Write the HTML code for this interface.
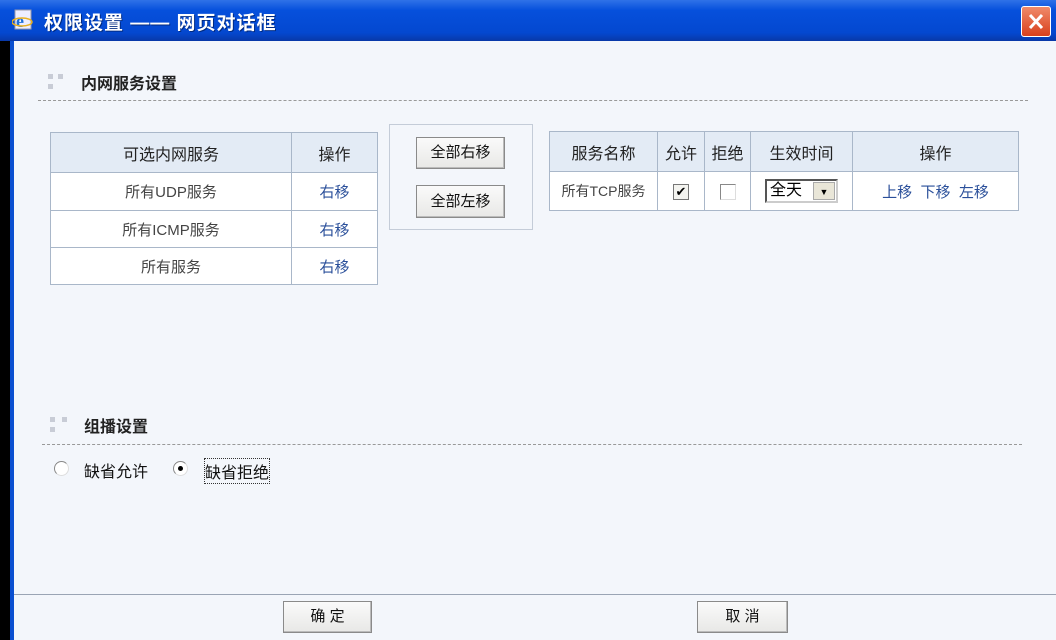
<!DOCTYPE html>
<html><head><meta charset="utf-8"><style>
*{margin:0;padding:0;box-sizing:border-box}
body{width:1056px;height:640px;overflow:hidden;background:#000;font-family:"Liberation Sans","Noto Sans CJK SC","WenQuanYi Zen Hei",sans-serif;font-size:15px;color:#333;position:relative}
.abs{position:absolute}
#title{left:0;top:0;width:1056px;height:41px;background:linear-gradient(#2f72e8,#0650dc 25%,#0448d0 80%,#0838a8);}
#title span{position:absolute;left:44px;top:8px;color:#fff;font-weight:bold;font-size:19px;letter-spacing:1px;text-shadow:1px 1px #002a80}
#frame{left:10px;top:41px;width:1046px;height:599px;background:#0a4fd0}
#content{left:14px;top:41px;width:1042px;height:599px;background:#f3f6fb}
.sec{font-weight:bold;font-size:16px;color:#222}
.dash{border-top:1px dashed #999;height:0}
table{border-collapse:collapse;position:absolute;background:#fff}
td{border:1px solid #a9b7c9;text-align:center;color:#444}
tr.h td{background:#e3ebf5;color:#222;font-size:16px}
a{color:#2a4f9a;text-decoration:none}
.btn{position:absolute;background:linear-gradient(#fafafa,#e8e8e6);border:1px solid #8a8a8a;box-shadow:inset -1px -1px #bbb;text-align:center;font-size:15px;color:#111}
.dots i{position:absolute;width:5px;height:5px;background:#c8ccd6}
</style></head><body>
<div id="title" class="abs">
<svg class="abs" style="left:12px;top:9px" width="22" height="22"><rect x="3" y="1" width="16" height="19" fill="#eef" stroke="#99a"/><text x="4" y="18" font-size="18" font-weight="bold" fill="#1d6fd8" font-family="Liberation Serif">e</text><ellipse cx="10" cy="13" rx="10" ry="4" fill="none" stroke="#e8b020" stroke-width="1.5"/></svg>
<span>权限设置 —— 网页对话框</span>
<div class="abs" style="left:1021px;top:6px;width:30px;height:31px;background:linear-gradient(#f08a6a,#d8401c);border:1px solid #fff;border-radius:3px"><svg width="28" height="29"><path d="M8 8L20 21M20 8L8 21" stroke="#fff" stroke-width="3"/></svg></div>
</div>
<div id="frame" class="abs"></div>
<div id="content" class="abs"></div>

<div class="dots"><i style="left:48px;top:74px"></i><i style="left:58px;top:74px"></i><i style="left:48px;top:84px"></i></div>
<div class="abs sec" style="left:81px;top:70px">内网服务设置</div>
<div class="abs dash" style="left:38px;top:100px;width:990px"></div>

<table style="left:50px;top:132px;width:328px">
<tr class="h" style="height:40px"><td style="width:241px">可选内网服务</td><td>操作</td></tr>
<tr style="height:38px"><td>所有UDP服务</td><td><a>右移</a></td></tr>
<tr style="height:37px"><td>所有ICMP服务</td><td><a>右移</a></td></tr>
<tr style="height:37px"><td>所有服务</td><td><a>右移</a></td></tr>
</table>

<div class="abs" style="left:389px;top:124px;width:144px;height:106px;border:1px solid #c4ccd8"></div>
<div class="btn" style="left:416px;top:137px;width:89px;height:32px;line-height:30px">全部右移</div>
<div class="btn" style="left:416px;top:185px;width:89px;height:33px;line-height:31px">全部左移</div>

<table style="left:549px;top:131px;width:470px">
<tr class="h" style="height:40px"><td style="width:108px">服务名称</td><td style="width:47px">允许</td><td style="width:46px">拒绝</td><td style="width:102px">生效时间</td><td>操作</td></tr>
<tr style="height:39px"><td style="font-size:14px">所有TCP服务</td>
<td><span style="display:inline-block;width:16px;height:16px;border:1px solid #777;background:#f4f4f0;vertical-align:middle;line-height:14px;font-size:13px;color:#000">✔</span></td>
<td><span style="display:inline-block;width:16px;height:16px;border:1px solid #888;border-right-color:#ddd;border-bottom-color:#ddd;background:#fff;vertical-align:middle"></span></td>
<td><span style="display:inline-block;width:73px;height:24px;border:2px solid #555;border-right-color:#ccc;border-bottom-color:#ccc;background:#fff;vertical-align:middle;position:relative;text-align:left;padding-left:3px;line-height:20px;color:#000;font-size:16px">全天<span style="position:absolute;right:1px;top:1px;width:22px;height:18px;background:#e9e6d8;border:1px solid #aaa;font-size:9px;text-align:center;line-height:18px">▼</span></span></td>
<td><a>上移</a>&nbsp; <a>下移</a>&nbsp; <a>左移</a></td></tr>
</table>

<div class="dots"><i style="left:50px;top:417px"></i><i style="left:62px;top:417px"></i><i style="left:50px;top:427px"></i></div>
<div class="abs sec" style="left:84px;top:413px">组播设置</div>
<div class="abs dash" style="left:42px;top:444px;width:980px"></div>

<div class="abs" style="left:54px;top:461px;width:15px;height:15px;border-radius:50%;background:#fff;border:1px solid #888;border-right-color:#ddd;border-bottom-color:#ddd"></div>
<div class="abs" style="left:84px;top:458px;color:#111;font-size:16px">缺省允许</div>
<div class="abs" style="left:173px;top:461px;width:15px;height:15px;border-radius:50%;background:#fff;border:1px solid #888;border-right-color:#ddd;border-bottom-color:#ddd"><div style="width:5px;height:5px;border-radius:50%;background:#000;margin:4px 0 0 4px"></div></div>
<div class="abs" style="left:204px;top:458px;color:#111;font-size:16px;border:1px dotted #333">缺省拒绝</div>

<div class="abs" style="left:14px;top:594px;width:1042px;height:1px;background:#9aa4b4"></div>
<div class="btn" style="left:283px;top:601px;width:89px;height:32px;line-height:30px">确 定</div>
<div class="btn" style="left:697px;top:601px;width:91px;height:32px;line-height:30px">取 消</div>
</body></html>
